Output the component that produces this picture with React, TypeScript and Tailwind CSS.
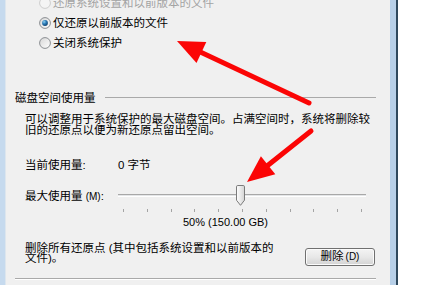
import React from 'react';

const font = "font-['Liberation_Sans','Noto_Sans_CJK_SC',sans-serif]";

const Radio = ({ checked, disabled }: { checked?: boolean; disabled?: boolean }) => (
  <svg width="12" height="12" viewBox="0 0 12 12" className="shrink-0">
    <defs>
      <linearGradient id="radioFill" x1="0" y1="0" x2="1" y2="1">
        <stop offset="0" stopColor="#d6d6d6" />
        <stop offset="1" stopColor="#ffffff" />
      </linearGradient>
      <radialGradient id="radioDot" cx="0.35" cy="0.3" r="0.8">
        <stop offset="0" stopColor="#8fd0f0" />
        <stop offset="0.45" stopColor="#2a7bb8" />
        <stop offset="1" stopColor="#0d3a63" />
      </radialGradient>
    </defs>
    <circle
      cx="6"
      cy="6"
      r="5.4"
      fill={disabled ? '#f4f4f4' : 'url(#radioFill)'}
      stroke={disabled ? '#cdcdcd' : '#8b8e92'}
      strokeWidth="1"
    />
    {checked && <circle cx="6" cy="6" r="2.9" fill="url(#radioDot)" />}
  </svg>
);

const Thumb = () => (
  <svg width="9" height="21" viewBox="0 0 9 21">
    <defs>
      <linearGradient id="thumbFill" x1="0" y1="0" x2="1" y2="0">
        <stop offset="0" stopColor="#ffffff" />
        <stop offset="1" stopColor="#d4d4d4" />
      </linearGradient>
    </defs>
    <path
      d="M1.8 0.5 H7.2 Q8.5 0.5 8.5 1.8 V15.2 L4.5 20.3 L0.5 15.2 V1.8 Q0.5 0.5 1.8 0.5 Z"
      fill="url(#thumbFill)"
      stroke="#7b7b7b"
      strokeWidth="1"
    />
  </svg>
);

const Arrows = () => (
  <svg className="absolute inset-0 pointer-events-none" width="428" height="285" viewBox="0 0 428 285">
    <line x1="309" y1="103" x2="195" y2="49.5" stroke="#fb0505" strokeWidth="5" strokeLinecap="round" />
    <polygon points="177,41 206.3,42.1 196.5,62.9" fill="#fb0505" />
    <line x1="311" y1="131" x2="262" y2="170" stroke="#fb0505" strokeWidth="5" strokeLinecap="round" />
    <polygon points="247,182 275.3,174.2 260.9,156.2" fill="#fb0505" />
  </svg>
);

const ticks = Array.from({ length: 11 }, (_, i) => i);

export default function App() {
  return (
    <div className={`relative w-[428px] h-[285px] overflow-hidden bg-white flex ${font} text-[11.5px] text-black`}>
      {/* window frame left */}
      <div className="w-[6px] bg-[#c6daee] border-r border-[#dde6ee]" />

      {/* dialog body */}
      <div className="w-[384px] bg-[#f0f0f0] flex flex-col">
        {/* restore options */}
        <div className="mt-[-7px] pl-[33px] flex flex-col">
          <div className="h-[20px] flex items-center gap-[2px] text-[#a3a3a3]">
            <Radio disabled />
            <span className="leading-[12px]">还原系统设置和以前版本的文件</span>
          </div>
          <div className="h-[20px] flex items-center gap-[2px]">
            <Radio checked />
            <span className="leading-[12px]">仅还原以前版本的文件</span>
          </div>
          <div className="h-[20px] flex items-center gap-[2px]">
            <Radio />
            <span className="leading-[12px]">关闭系统保护</span>
          </div>
        </div>

        {/* group header */}
        <div className="mt-[39px] pl-[9px] pr-[14px] h-[12px] flex items-center">
          <span className="leading-[12px]">磁盘空间使用量</span>
          <div className="ml-[9px] flex-1 h-px bg-[#a9a9a9] -mt-[2px]" />
        </div>

        {/* description */}
        <p className="mt-[10px] pl-[19px] leading-[11px]">
          可以调整用于系统保护的最大磁盘空间。占满空间时，系统将删除较
          <br />
          旧的还原点以便为新还原点留出空间。
        </p>

        {/* current usage */}
        <div className="mt-[23px] pl-[19px] h-[12px] flex items-center">
          <span className="w-[93px] leading-[12px]">当前使用量:</span>
          <span className="leading-[12px]">0 字节</span>
        </div>

        {/* max usage slider */}
        <div className="mt-[14px] pl-[19px] flex items-start">
          <span className="w-[93px] mt-[5px] leading-[12px]">
            最大使用量 <span className="text-[10px]">(M)</span>:
          </span>
          <div className="w-[248px] flex flex-col">
            <div className="relative h-[21px]">
              <div className="absolute left-0 right-0 top-[9px] h-[3px] bg-[#e4e6e8] border-t border-[#a8a8a8] border-b border-b-white" />
              <div className="absolute left-[118px] top-0">
                <Thumb />
              </div>
            </div>
            <div className="mt-[3px] ml-[5px] w-[239px] h-[3px] flex justify-between">
              {ticks.map((t) => (
                <div key={t} className="w-px h-[3px] bg-[#a4a4a4]" />
              ))}
            </div>
            <div className="mt-[4px] pl-[65px] leading-[12px] text-[11px]">50% (150.00 GB)</div>
          </div>
        </div>

        {/* delete restore points */}
        <div className="mt-[15px] pl-[19px] pr-[15px] flex items-start">
          <p className="flex-1 leading-[10px]">
            删除所有还原点 (其中包括系统设置和以前版本的
            <br />
            文件)。
          </p>
          <button className="mt-[5px] w-[70px] h-[18px] rounded-[3px] border border-[#707070] bg-linear-to-b from-[#f4f4f4] via-[#e8e8e8] to-[#d3d3d3] shadow-[inset_0_0_0_1px_#fbfbfb] flex items-center justify-center leading-none">
            删除 <span className="ml-[2px] text-[10px]">(D)</span>
          </button>
        </div>

        {/* bottom separator */}
        <div className="mt-[12px] ml-[9px] mr-[14px] h-[2px] border-t border-[#a9a9a9] border-b border-b-white" />
      </div>

      {/* window frame right */}
      <div className="w-[6px] bg-[#b8d0e8]" />
      <div className="w-[2px] bg-[#30495d]" />
      <div className="flex-1 bg-white" />

      <Arrows />
    </div>
  );
}
